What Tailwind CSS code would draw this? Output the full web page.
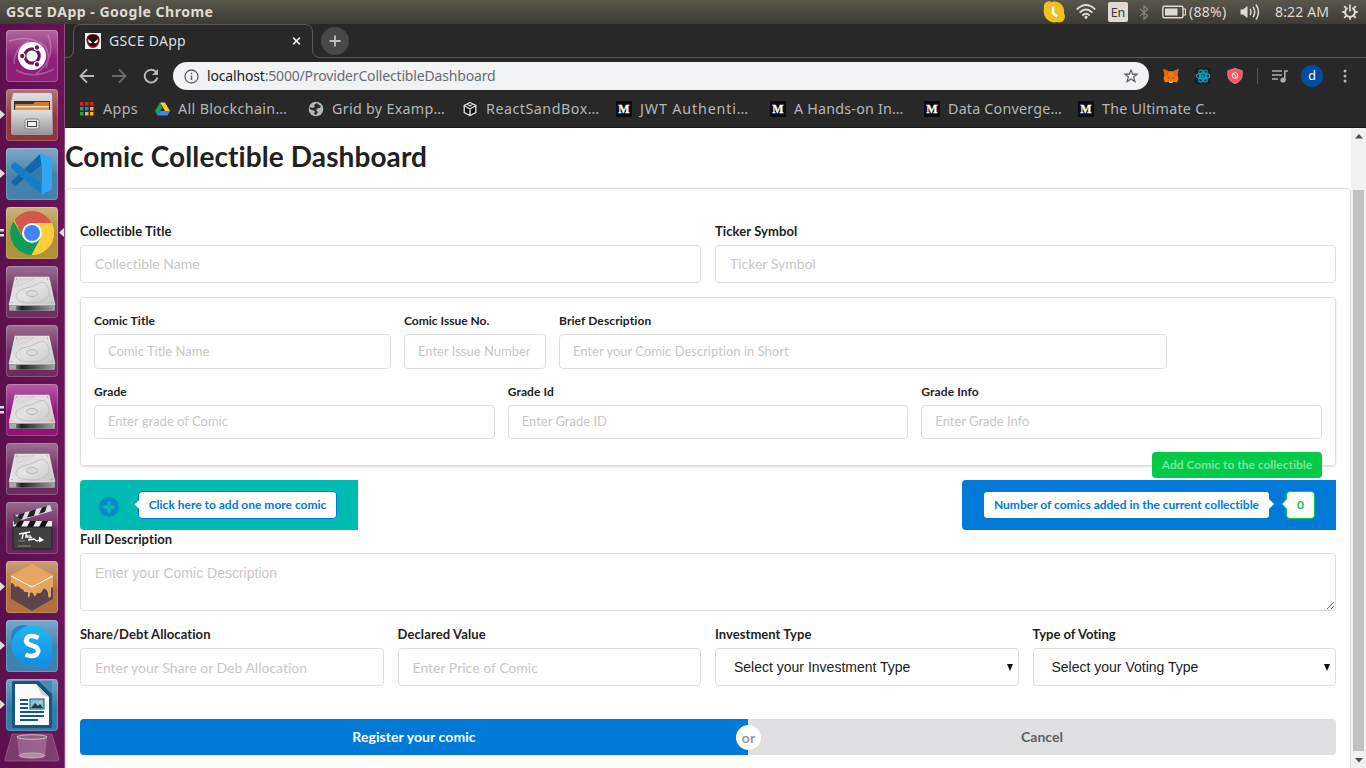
<!DOCTYPE html>
<html lang="en">
<head>
<meta charset="utf-8">
<title>GSCE DApp</title>
<script src="https://cdn.jsdelivr.net/npm/@tailwindcss/browser@4"></script>
</head>
<body class="w-[1366px] h-[768px] overflow-hidden bg-white">
<svg width="0" height="0" class="absolute">
  <defs>
    <linearGradient id="gloss" x1="0" y1="0" x2="0" y2="1"><stop offset="0" stop-color="#fff" stop-opacity=".34"/><stop offset=".55" stop-color="#fff" stop-opacity=".03"/><stop offset="1" stop-color="#fff" stop-opacity=".03"/></linearGradient>
    <linearGradient id="silver" x1="0" y1="0" x2="0" y2="1"><stop offset="0" stop-color="#e0e0e0"/><stop offset="1" stop-color="#989898"/></linearGradient>
    <linearGradient id="disk" x1="0" y1="0" x2="1" y2="1"><stop offset="0" stop-color="#d8d8d8"/><stop offset=".5" stop-color="#e2e2e2"/><stop offset="1" stop-color="#c4c4c4"/></linearGradient>
    <linearGradient id="diskfront" x1="0" y1="0" x2="1" y2="0"><stop offset="0" stop-color="#777"/><stop offset=".15" stop-color="#222"/><stop offset="1" stop-color="#999"/></linearGradient>
    <linearGradient id="sky" x1="0" y1="0" x2="0" y2="1"><stop offset="0" stop-color="#24b4f0"/><stop offset="1" stop-color="#0f8fe0"/></linearGradient>
    <symbol id="drive" viewBox="0 0 52 52">
      <path d="M9 11H43L49 38V44Q49 45 48 45H4Q3 45 3 44V38Z" fill="#777"/>
      <path d="M9 11H43L49 39H3Z" fill="url(#disk)" stroke="#f0f0f0" stroke-width=".5"/>
      <path d="M3.400 39.500H48.600V44.500H3.400Z" fill="#a9a9a9"/><path d="M10 40H47V44.500H10Z" fill="url(#diskfront)"/>
      <path d="M10 29C13 21 24 23 31 18C37 14 42 18 43 25C44 33 36 37 26 37C15 37 9 34 10 29Z" fill="none" stroke="#bdbdbd" stroke-width=".9"/>
      <ellipse cx="26" cy="27.500" rx="5.500" ry="3" fill="#dcdcdc" stroke="#b0b0b0" stroke-width=".9"/><path d="M12 14L28 12.500Q22 17 11 20Z" fill="none" stroke="#cbcbcb" stroke-width=".8"/>
      <circle cx="10.500" cy="13" r=".6" fill="#888"/><circle cx="41.500" cy="13" r=".6" fill="#888"/><circle cx="6" cy="36.500" r=".6" fill="#888"/><circle cx="46" cy="36.500" r=".6" fill="#888"/>
    </symbol>
    <symbol id="medium" viewBox="0 0 16 16"><rect width="16" height="16" fill="#0d0d0d"/><text x="8" y="12" text-anchor="middle" font-family="Liberation Serif, serif" font-weight="700" font-size="12" fill="#fff" stroke="#fff" stroke-width=".3">M</text></symbol>
  </defs>
</svg>

<div class="flex h-[768px] w-[1366px] flex-col font-['Open_Sans',sans-serif]">
  <!-- system panel -->
  <header class="flex h-6 shrink-0 items-center bg-linear-to-b from-[#59564c] to-[#3d3b36] pl-[6px] text-[#dfdbd2]">
    <div class="w-[1037px] whitespace-nowrap text-[14px] font-bold leading-6 tracking-[.5px] font-['Noto_Sans',sans-serif]">GSCE DApp - Google Chrome</div>
    <svg width="22" height="22" viewBox="0 0 22 22"><path d="M1 7C0 2 5 -1 9 1C16 -1 22 5 21 12C24 18 19 23 14 21C7 23 -1 17 1 7Z" fill="#f2c01e"/><path d="M10 5.500V12L14 15.500" fill="none" stroke="#fff" stroke-width="2.600"/></svg>
    <svg class="ml-[11px]" width="20" height="16" viewBox="0 0 20 16" fill="none" stroke="#dfdbd2" stroke-width="1.800"><path d="M.8 5.500Q10-3.500 19.200 5.500M3.600 8.600Q10 2.300 16.400 8.600M6.300 11.500Q10 7.900 13.700 11.500"/><path d="M8 13L10 11.500L12 13L10 15.500Z" fill="#dfdbd2" stroke="none"/></svg>
    <div class="ml-[12px] h-5 w-5 rounded-[2px] bg-[#dfdbd2] text-center text-[12.500px] leading-[21px] text-[#3d3b36] font-['Noto_Sans',sans-serif]">En</div>
    <svg class="ml-[11px]" width="10" height="17" viewBox="0 0 11 17" fill="none" stroke="#8b887f" stroke-width="1.300"><path d="M1 4.500L9.500 12L5.500 15.800V1.200L9.500 5L1 12.500"/></svg>
    <svg class="ml-[13px]" width="24" height="14" viewBox="0 0 24 14"><rect x=".8" y="1.300" width="20.200" height="11.400" rx="1.500" fill="none" stroke="#dfdbd2" stroke-width="1.400"/><rect x="3" y="3.500" width="12.500" height="7" fill="#dfdbd2"/><path d="M21 4H23.500V10H21" fill="none" stroke="#dfdbd2" stroke-width="1.200"/></svg>
    <div class="ml-[3px] w-[51px] whitespace-nowrap text-[14px] leading-6 tracking-[.3px] font-['Noto_Sans',sans-serif]">(88%)</div>
    <svg width="20" height="18" viewBox="0 0 20 18"><path d="M.5 6.500H3L7.500 3V15L3 11.500H.5Z" fill="#dfdbd2"/><path d="M10 6Q12 9 10 12M13 3.800Q16.500 9 13 14.200M16 1.500Q21 9 16 16.500" fill="none" stroke="#dfdbd2" stroke-width="1.500"/></svg>
    <div class="ml-[15px] w-[67px] whitespace-nowrap text-[14px] leading-6 tracking-[.15px] font-['Noto_Sans',sans-serif]">8:22 AM</div>
    <svg width="16" height="16" viewBox="0 0 18 18" fill="none" stroke="#dfdbd2"><path d="M6.300 4.300A5.500 5.500 0 1 0 11.700 4.300" stroke-width="2.200"/><path d="M9 .5V8.500" stroke-width="2"/><path d="M2.500 2.500L4.500 4.500M15.500 2.500L13.500 4.500M.3 9H4M14 9H17.700M2.500 15.500L5 13M15.500 15.500L13 13M9 14V17.700" stroke-width="2"/></svg>
  </header>

  <div class="flex min-h-0 grow">
    <!-- launcher -->
    <nav class="relative flex w-[65px] shrink-0 flex-col gap-[7px] border-r border-[#8d4b80] bg-linear-to-r from-[#5c0f4d] to-[#691457] pl-[6px] pt-[6px]">
      <div class="h-[52px] w-[52px] overflow-hidden rounded-[4px] bg-[#8a1a72] ring-1 ring-inset ring-white/25"><svg width="52" height="52" viewBox="0 0 52 52"><rect width="52" height="52" fill="url(#gloss)"/><g fill="none" stroke="#fff" stroke-opacity=".25" stroke-width="1.500"><path d="M3 11Q23 4 39 16Q45 25 40 38M42 5Q51 28 30 44M8 34Q8 18 23 11M10 40Q27 50 48 39"/></g><circle cx="26" cy="26" r="14" fill="#fff"/><circle cx="26" cy="26" r="7.200" fill="none" stroke="#6c1459" stroke-width="3.200"/><g stroke="#fff" stroke-width="1.100" fill="#6c1459"><circle cx="16.200" cy="26" r="2.700"/><circle cx="31" cy="17.500" r="2.700"/><circle cx="31" cy="34.500" r="2.700"/></g></svg></div>
      <div class="h-[52px] w-[52px] overflow-hidden rounded-[4px] bg-[#8c3038] ring-1 ring-inset ring-white/20"><svg width="52" height="52" viewBox="0 0 52 52"><rect width="52" height="52" fill="url(#gloss)"/><path d="M7 5Q7 4 8 4H44Q46 4 46 6L47 44Q47 46 45 46H7Q5 46 5 44V13Z" fill="url(#silver)"/><path d="M8 12H44V24H8Z" fill="#333"/><path d="M9 15H27L29 13H43V22H9Z" fill="#d8762c"/><path d="M10 17H43V18.500H10Z" fill="#fff3dd"/><path d="M9 18.500H43V22H9Z" fill="#e89550"/><path d="M6 21H46V45H6Z" fill="url(#silver)"/><rect x="19" y="30" width="14" height="10" rx="2" fill="#ddd" stroke="#888"/><rect x="21.500" y="32.500" width="9" height="5" fill="#eee" stroke="#444"/></svg></div>
      <div class="h-[52px] w-[52px] overflow-hidden rounded-[4px] bg-[#3f7da8] ring-1 ring-inset ring-white/20"><svg width="52" height="52" viewBox="0 0 52 52"><rect width="52" height="52" fill="url(#gloss)"/><path d="M5 34L34 6L36 17L9 38Z" fill="#1066a8"/><path d="M5 17L9 14L37 35L35 46L5 20Z" fill="#147fc8"/><path d="M34 5L46 10.500V41L35.500 47V17Z" fill="#2fa6f2"/><path d="M36 17V36L24 26.500Z" fill="#367da8"/></svg></div>
      <div class="h-[52px] w-[52px] overflow-hidden rounded-[4px] bg-[#ae8c37] ring-1 ring-inset ring-white/20"><svg width="52" height="52" viewBox="0 0 52 52"><rect width="52" height="52" fill="url(#gloss)"/><circle cx="26" cy="26" r="22" fill="#fbce3c"/><path d="M7 15A22 22 0 0 0 26 48L34.700 31L26 26L17.300 31L7.500 14Z" fill="#119b58"/><path d="M8.300 13A22 22 0 0 1 45.600 16H26L17.300 31Z" fill="#d3574b"/><path d="M25.500 48L34.700 31L26 16H45.600A22 22 0 0 1 25.500 48Z" fill="#fbce3c"/><circle cx="26" cy="26" r="10" fill="#fff"/><circle cx="26" cy="26" r="8" fill="#4384f3"/></svg></div>
      <div class="h-[52px] w-[52px] overflow-hidden rounded-[4px] bg-[#68265a] ring-1 ring-inset ring-white/20"><svg width="52" height="52"><rect width="52" height="52" fill="url(#gloss)"/><use href="#drive"/></svg></div>
      <div class="h-[52px] w-[52px] overflow-hidden rounded-[4px] bg-[#68265a] ring-1 ring-inset ring-white/20"><svg width="52" height="52"><rect width="52" height="52" fill="url(#gloss)"/><use href="#drive"/></svg></div>
      <div class="h-[52px] w-[52px] overflow-hidden rounded-[4px] bg-[#8e0b75] ring-1 ring-inset ring-white/20"><svg width="52" height="52"><rect width="52" height="52" fill="url(#gloss)"/><use href="#drive"/></svg></div>
      <div class="h-[52px] w-[52px] overflow-hidden rounded-[4px] bg-[#68265a] ring-1 ring-inset ring-white/20"><svg width="52" height="52"><rect width="52" height="52" fill="url(#gloss)"/><use href="#drive"/></svg></div>
      <div class="h-[52px] w-[52px] overflow-hidden rounded-[4px] bg-[#631e56] ring-1 ring-inset ring-white/20"><svg width="52" height="52" viewBox="0 0 52 52"><rect width="52" height="52" fill="url(#gloss)"/><path d="M7 14L44 3L46 9L9 20Z" fill="#ddd"/><path d="M13 12L19 10.500L16 17L10 18ZM24 9L30 7L28 14L21 15.500ZM36 5.500L41 4L39 10L33 12Z" fill="#222"/><path d="M7 19H46V25H7Z" fill="#eee"/><path d="M12 19H18L15 25H9ZM24 19H30L27 25H21ZM36 19H42L39 25H33Z" fill="#111"/><path d="M7 25H46V47H7Z" fill="#414141" stroke="#222"/><path d="M7 12L16 18L8 23Z" fill="#444"/><path d="M13 32L24 30M17.500 31L16 37M20 31V36M20 34H22V36M24 33V36L26 35M22 38L28 37L31 39L36 37" stroke="#fff" stroke-width="1.300" fill="none"/><path d="M33 34.500L38 38L33 40.500Z" fill="#fff"/><path d="M12 39H19M12 44H25" stroke="#999" stroke-width=".8"/></svg></div>
      <div class="h-[52px] w-[52px] overflow-hidden rounded-[4px] bg-[#b06d35] ring-1 ring-inset ring-white/20"><svg width="52" height="52" viewBox="0 0 52 52"><rect width="52" height="52" fill="url(#gloss)"/><path d="M26 3L47 14V38L26 50L5 38V14Z" fill="#e4a660"/><path d="M5 22Q8 22 9 26Q13 24 15 28Q18 28 18 31H22V36Q24 37 24 32Q27 30 28 35Q30 36 31 32Q36 33 37 28Q42 26 43 38V28L47 26V38L26 50L5 38Z" fill="#5d454b"/><path d="M42 24H45V35Q43.500 38 42 35Z" fill="#e4a660"/><path d="M5 15L26 26L47 15" fill="none" stroke="#fff" stroke-width="1"/></svg></div>
      <div class="h-[52px] w-[52px] overflow-hidden rounded-[4px] bg-[#397dab] ring-1 ring-inset ring-white/20"><svg width="52" height="52" viewBox="0 0 52 52"><rect width="52" height="52" fill="url(#gloss)"/><circle cx="17" cy="17" r="12" fill="#1b87c6"/><circle cx="35" cy="36" r="12" fill="#1292e0"/><circle cx="26" cy="26" r="20.500" fill="url(#sky)"/><path d="M32.500 18Q26 14.500 21.800 17Q18.500 20.500 22 24Q26 25.500 30 27Q34 31 30.500 34.500Q26 37.500 19.500 34.500" fill="none" stroke="#fff" stroke-width="4.600"/></svg></div>
      <div class="h-[52px] w-[52px] overflow-hidden rounded-[4px] bg-[#2d77a9] ring-1 ring-inset ring-white/20"><svg width="52" height="52" viewBox="0 0 52 52"><rect width="52" height="52" fill="url(#gloss)"/><path d="M6 3Q6 2 8 2H33L46 15V47Q46 49 44 49H8Q6 49 6 47Z" fill="#135680"/><path d="M34 2H46V14Z" fill="#4a8ab0"/><path d="M9 5H30L43 18V46H9Z" fill="#fafafa"/><path d="M30 5L43 18L36 16Z" fill="#d0d0d0"/><path d="M14 21H22M14 25H22M14 29H22M14 33H38M14 37H38M14 41H32" stroke="#145a86" stroke-width="2"/><rect x="24" y="20" width="14" height="10" fill="#7cc3ea" stroke="#145a86"/><path d="M25 29L29 24L32 27L34 25L37 29Z" fill="#333"/><circle cx="34.500" cy="23" r="1.500" fill="#f7d23e"/></svg></div>
      <svg class="-ml-[2px] -mt-[5px] shrink-0" width="56" height="31" viewBox="0 0 56 31"><path d="M8 1H48L55 26Q55 28 53 28H2Q0 28 1 26Z" fill="#fff" fill-opacity=".18" stroke="#a5709a" stroke-width=".6"/><path d="M13 4L15 23Q28 28 41 23L43 4Z" fill="#fff" fill-opacity=".2"/><ellipse cx="28" cy="4" rx="15" ry="2.300" fill="#8d6284" stroke="#ccc" stroke-width=".9"/><ellipse cx="28" cy="22.500" rx="13" ry="2.500" fill="#c7b3c3" fill-opacity=".5" stroke="#cbb" stroke-width=".8"/></svg>
      <!-- running and focus marks -->
      <svg class="absolute left-0 top-0" width="64" height="744" fill="#dcdcdc"><path d="M0 86L5 90.500L0 95ZM0 145L5 149.500L0 154ZM0 558L5 562.500L0 567ZM0 617L5 621.500L0 626ZM0 676L5 680.500L0 685ZM64 204L59 208.500L64 213ZM0 205H4V207.500H0ZM0 210H4V212.500H0ZM0 382H4V384.500H0ZM0 387H4V389.500H0Z"/></svg>
    </nav>

    <div class="flex min-w-0 grow flex-col">
      <!-- tab strip -->
      <div class="relative flex h-[34px] shrink-0 items-center bg-[#282828] text-[#dadce0]">
        <svg class="absolute left-0 top-0" width="1301" height="34" fill="none" stroke="#5a5a5a"><path d="M0 33.500H2Q8.500 33 8.500 26V8Q9 .5 16 .5H240Q247.500 .5 247.500 8V26Q248 33 255 33.500H1301"/></svg>
        <svg class="ml-5" width="16" height="16" viewBox="0 0 16 16"><rect width="16" height="16" fill="#eee"/><path d="M8 1C13 1 15 4 14.500 8C14 12 11 15 8 15C5 15 2 12 1.500 8C1 4 3 1 8 1Z" fill="#8d1022"/><path d="M8 2C12 2 13 4 13 7L11 13H5L3 7C3 4 4 2 8 2Z" fill="#180b0e"/><path d="M3 6L7.200 9.500Q5 11 3.500 9ZM13 6L8.800 9.500Q11 11 12.500 9Z" fill="#fff"/></svg>
        <div class="ml-2 w-[183px] whitespace-nowrap pb-[2px] text-[14px] tracking-[.3px] font-['Noto_Sans',sans-serif]">GSCE DApp</div>
        <svg width="9" height="10" viewBox="0 0 10 10" stroke="#e4e4e4" stroke-width="1.800"><path d="M1.300 1.300L8.700 8.700M8.700 1.300L1.300 8.700"/></svg>
        <svg class="ml-5" width="28" height="28" viewBox="0 0 28 28"><circle cx="14" cy="14" r="14" fill="#484848"/><path d="M14 8.500V19.500M8.500 14H19.500" stroke="#c0c0c0" stroke-width="1.800"/></svg>
      </div>
      <!-- toolbar -->
      <div class="flex h-9 shrink-0 items-center bg-[#282828] pl-[14px]">
        <svg width="16" height="16" viewBox="0 0 16 16" fill="none" stroke="#b6b8bb" stroke-width="1.900"><path d="M15 8H2M8 1.300L1.500 8L8 14.700"/></svg>
        <svg class="ml-4" width="16" height="16" viewBox="0 0 16 16" fill="none" stroke="#6b6b6b" stroke-width="1.900"><path d="M1 8H14M8 1.300L14.500 8L8 14.700"/></svg>
        <svg class="ml-4" width="16" height="16" viewBox="0 0 16 16"><path d="M13.300 4.300A6.400 6.400 0 1 0 14.400 9.500" fill="none" stroke="#b6b8bb" stroke-width="1.900"/><path d="M15 1V7H9Z" fill="#b6b8bb"/></svg>
        <div class="ml-[14px] flex h-7 w-[976px] items-center rounded-full bg-[#f1f3f4] pl-[11px] pr-[11px] text-[#6a6d71]">
          <svg width="15" height="15" viewBox="0 0 15 15"><circle cx="7.500" cy="7.500" r="6.500" fill="none" stroke="#5f6368" stroke-width="1.300"/><path d="M7.500 6.500V11M7.500 3.700V5.200" stroke="#5f6368" stroke-width="1.500"/></svg>
          <div class="ml-2 grow whitespace-nowrap pb-[2px] text-[14px] tracking-[-.17px] font-['Noto_Sans',sans-serif]"><span class="text-[#202124]">localhost</span>:5000/ProviderCollectibleDashboard</div>
          <svg width="14" height="14" viewBox="0 0 24 24" fill="none" stroke="#5f6368" stroke-width="2.200"><path d="M12 1.800L15 9H22.500L16.500 13.800L18.700 21.500L12 17L5.300 21.500L7.500 13.800L1.500 9H9Z"/></svg>
        </div>
        <svg class="ml-[14px]" width="16" height="16" viewBox="0 0 17 16"><path d="M.5 .5L6 3H11L16.500 .5L15.500 7L16.500 11L15 15L11 14L9.500 15.500H7.500L6 14L2 15L.5 11L1.500 7Z" fill="#f0780f"/><path d="M.5 .5L6 3L5 8L1.500 7ZM16.500 .5L11 3L12 8L15.500 7Z" fill="#dd6a10"/><path d="M6 12.500L8 14H9L11 12.500L10 15.500H7Z" fill="#dcc5b4"/><path d="M4.500 9L7 10L6 11ZM12.500 9L10 10L11 11Z" fill="#283448"/></svg>
        <svg class="ml-4" width="16" height="16" viewBox="0 0 16 16" fill="none" stroke="#00b4d8" stroke-width="1.100"><rect width="16" height="16" fill="#1d1d1d" stroke="none"/><ellipse cx="8" cy="8" rx="6.800" ry="2.700"/><ellipse cx="8" cy="8" rx="6.800" ry="2.700" transform="rotate(60 8 8)"/><ellipse cx="8" cy="8" rx="6.800" ry="2.700" transform="rotate(120 8 8)"/><circle cx="8" cy="8" r="1" fill="#00b4d8"/></svg>
        <svg class="ml-4" width="16" height="16" viewBox="0 0 16 16"><path d="M8 .3L15.300 2.700V7Q15 13 8 15.700Q1 13 .7 7V2.700Z" fill="#f9585f" stroke="#ff9599" stroke-width=".6"/><circle cx="8" cy="7.500" r="2.800" fill="none" stroke="#fff" stroke-width=".9"/><path d="M6 5.500L10 9.500" stroke="#fff" stroke-width=".9"/></svg>
        <div class="ml-[14px] h-4 w-px bg-[#555]"></div>
        <svg class="ml-[14px]" width="16" height="14" viewBox="0 0 16 14" fill="none" stroke="#a9abae" stroke-width="1.600"><path d="M0 2H10M0 6H10M0 10H6M12.800 11V2H16"/><circle cx="11" cy="11" r="1.800" fill="#a9abae"/></svg>
        <div class="ml-[13px] h-[22px] w-[22px] rounded-full bg-[#014ba0] text-center text-[12.500px] leading-[21px] text-white font-['Noto_Sans',sans-serif]">d</div>
        <svg class="ml-5" width="4" height="14" viewBox="0 0 4 14" fill="#b6b8bb"><circle cx="2" cy="2" r="1.500"/><circle cx="2" cy="7" r="1.500"/><circle cx="2" cy="12" r="1.500"/></svg>
      </div>
      <!-- bookmarks -->
      <div class="flex h-[34px] shrink-0 items-center border-b border-[#1c1c1c] bg-[#282828] pl-[14px] pb-[3px] text-[14.300px] text-[#b4b6ba] font-['Noto_Sans',sans-serif]">
        <div class="flex w-[75px] items-center gap-[9px] whitespace-nowrap"><svg class="ml-px shrink-0" width="14" height="14" viewBox="0 0 14 14"><path d="M0 0H3.500V3.500H0ZM5 0H8.500V3.500H5ZM10 0H13.500V3.500H10Z" fill="#e32020"/><path d="M0 5H3.500V8.500H0ZM0 10H3.500V13.500H0Z" fill="#19a54a"/><path d="M5 5H8.500V8.500H5Z" fill="#1f7bea"/><path d="M10 5H13.500V8.500H10ZM5 10H8.500V13.500H5ZM10 10H13.500V13.500H10Z" fill="#f9b31a"/></svg><span class="tracking-[.35px]">Apps</span></div>
        <div class="flex w-[154px] items-center gap-2 whitespace-nowrap"><svg class="ml-px shrink-0" width="15" height="14" viewBox="0 0 15 14"><path d="M5 .5H10L15 9H10Z" fill="#fbcb2d"/><path d="M5 .5L7.500 5L2.500 13.500L0 9Z" fill="#12a15f"/><path d="M5 9H15L12.500 13.500H2.500Z" fill="#4184f2"/></svg><span class="tracking-[.35px]">All Blockchain…</span></div>
        <div class="flex w-[154px] items-center gap-2 whitespace-nowrap"><svg class="shrink-0" width="16" height="16" viewBox="0 0 16 16"><circle cx="8" cy="8" r="7.300" fill="#b8b8b8"/><path d="M9 2L6 4L7 6L4 7L2 6L1.500 8L4 9L7 10L6 13L8 14L10 11L8 9L10 7L12 7L13 5L11 4Z" fill="#2c2c2c"/></svg><span class="tracking-[.3px]">Grid by Examp…</span></div>
        <div class="flex w-[154px] items-center gap-2 whitespace-nowrap"><svg class="shrink-0" width="16" height="16" viewBox="0 0 16 16" fill="none" stroke="#dcdcdc" stroke-width="1.400"><circle cx="8" cy="8" r="7.500" fill="#151515" stroke="none"/><path d="M8 1.500L13.800 4.500V11.500L8 14.500L2.200 11.500V4.500ZM2.200 4.500L8 8L13.800 4.500M8 8V14.500M5 3L8 5L11 3"/></svg><span class="tracking-[.5px]">ReactSandBox…</span></div>
        <div class="flex w-[154px] items-center gap-2 whitespace-nowrap"><svg class="shrink-0" width="16" height="16"><use href="#medium"/></svg><span class="tracking-[.85px]">JWT Authenti…</span></div>
        <div class="flex w-[154px] items-center gap-2 whitespace-nowrap"><svg class="shrink-0" width="16" height="16"><use href="#medium"/></svg><span class="tracking-[.2px]">A Hands-on In…</span></div>
        <div class="flex w-[154px] items-center gap-2 whitespace-nowrap"><svg class="shrink-0" width="16" height="16"><use href="#medium"/></svg><span class="tracking-[.2px]">Data Converge…</span></div>
        <div class="flex items-center gap-2 whitespace-nowrap"><svg class="shrink-0" width="16" height="16"><use href="#medium"/></svg><span class="tracking-[.25px]">The Ultimate C…</span></div>
      </div>

      <!-- page -->
      <div class="flex min-h-0 grow">
        <main class="flex w-[1286px] shrink-0 flex-col bg-white text-[#212121] font-['Lato',sans-serif] [font-variant-ligatures:none]">
          <h1 class="h-[60px] pt-[10px] text-[28px] font-bold leading-9 tracking-[.1px]">Comic Collectible Dashboard</h1>
          <form class="grow rounded-t-[4px] border border-b-0 border-[#dededf] px-[14px] pt-[33px]">
            <div class="grid grid-cols-2 gap-[14px] text-[14px]">
              <label class="flex flex-col"><span class="h-[23px] text-[13px] font-bold leading-[19px] tracking-[.08px]">Collectible Title</span><input class="h-[38px] rounded-[4px] border border-[#dededf] px-[14px] pb-[2px] placeholder:text-[#c7c7c7]" placeholder="Collectible Name"></label>
              <label class="flex flex-col"><span class="h-[23px] text-[13px] font-bold leading-[19px] tracking-[.08px]">Ticker Symbol</span><input class="h-[38px] rounded-[4px] border border-[#dededf] px-[14px] pb-[2px] placeholder:text-[#c7c7c7]" placeholder="Ticker Symbol"></label>
            </div>
            <section class="relative mt-[14px] h-[169px] rounded-[4px] border border-[#dededf] px-[13px] pt-[14px] text-[13px] shadow-[0_1px_2px_rgba(34,36,38,.15)]">
              <div class="flex gap-[13px]">
                <label class="flex w-[297px] flex-col"><span class="h-[22px] text-[12px] font-bold leading-[18px] tracking-[.08px]">Comic Title</span><input class="h-[35px] rounded-[4px] border border-[#dededf] px-[13px] pb-[2px] placeholder:text-[#c7c7c7]" placeholder="Comic Title Name"></label>
                <label class="flex w-[142px] flex-col"><span class="h-[22px] text-[12px] font-bold leading-[18px]">Comic Issue No.</span><input class="h-[35px] w-full rounded-[4px] border border-[#dededf] px-[13px] pb-[2px] placeholder:text-[#c7c7c7]" placeholder="Enter Issue Number"></label>
                <label class="flex w-[608px] flex-col"><span class="h-[22px] text-[12px] font-bold leading-[18px] tracking-[.1px]">Brief Description</span><input class="h-[35px] rounded-[4px] border border-[#dededf] px-[13px] pb-[2px] placeholder:text-[#c7c7c7]" placeholder="Enter your Comic Description in Short"></label>
              </div>
              <div class="mt-[14px] grid grid-cols-3 gap-[13px]">
                <label class="flex flex-col"><span class="h-[22px] text-[12px] font-bold leading-[18px] tracking-[.1px]">Grade</span><input class="h-[34px] rounded-[4px] border border-[#dededf] px-[13px] pb-[2px] placeholder:text-[#c7c7c7]" placeholder="Enter grade of Comic"></label>
                <label class="flex flex-col"><span class="h-[22px] text-[12px] font-bold leading-[18px] tracking-[.1px]">Grade Id</span><input class="h-[34px] rounded-[4px] border border-[#dededf] px-[13px] pb-[2px] placeholder:text-[#c7c7c7]" placeholder="Enter Grade ID"></label>
                <label class="flex flex-col"><span class="h-[22px] text-[12px] font-bold leading-[18px] tracking-[.1px]">Grade Info</span><input class="h-[34px] rounded-[4px] border border-[#dededf] px-[13px] pb-[2px] placeholder:text-[#c7c7c7]" placeholder="Enter Grade Info"></label>
              </div>
              <button type="button" class="absolute right-[13px] top-[154px] h-[26px] w-[170px] whitespace-nowrap rounded-[4px] bg-[#00ca46] text-[12px] font-bold leading-[26px] text-white/50">Add Comic to the collectible</button>
            </section>
            <div class="mt-[14px] flex h-[50px] justify-between text-[12px] font-bold">
              <div class="flex w-[278px] items-start rounded-l-[4px] bg-[#00bbb2] pl-[19px]">
                <svg class="mt-[17px]" width="20" height="20" viewBox="0 0 20 20"><circle cx="10" cy="10" r="10" fill="#0688cd"/><path d="M10 4V16M4 10H16" stroke="#00bbb2" stroke-width="3.400"/></svg>
                <div class="relative ml-[19px] mt-[11px] h-7 w-[199px] whitespace-nowrap rounded-[4px] border border-[#007ad6] bg-white text-center leading-[26px] text-[#007ad6]">Click here to add one more comic<svg class="absolute -left-[6px] top-[7px]" width="7" height="11" viewBox="0 0 7 11"><path d="M7 0L1 5.500L7 11Z" fill="#fff"/><path d="M6 .5L.7 5.500L6 10.500" fill="none" stroke="#007ad6" stroke-width=".8"/></svg></div>
              </div>
              <div class="flex w-[374px] items-start rounded-l-[4px] bg-[#007ad6] pl-[22px]">
                <div class="relative mt-3 h-[26px] w-[285px] whitespace-nowrap rounded-[3px] bg-white text-center leading-[26px] text-[#007ad6]">Number of comics added in the current collectible<svg class="absolute -right-[5px] top-[6px]" width="6" height="12" viewBox="0 0 6 12"><path d="M0 0L6 6L0 12Z" fill="#fff"/></svg></div>
                <div class="relative ml-[17px] mt-[11px] h-7 w-[29px] rounded-[4px] border border-[#00ca46] bg-white text-center leading-[26px] text-[#21ba45]">0<svg class="absolute -left-[6px] top-[6px]" width="7" height="12" viewBox="0 0 7 12"><path d="M7 0L1 6L7 12Z" fill="#fff"/><path d="M6 .5L.7 6L6 11.500" fill="none" stroke="#00ca46"/></svg></div>
              </div>
            </div>
            <label class="flex flex-col"><span class="h-[23px] text-[13px] font-bold leading-[19px] tracking-[.08px]">Full Description</span><textarea class="h-[58px] rounded-[4px] border border-[#dededf] px-[14px] pt-[10px] text-[14px] leading-[18px] placeholder:text-[#c7c7c7] font-['Liberation_Sans',sans-serif]" placeholder="Enter your Comic Description"></textarea></label>
            <div class="mt-[14px] grid grid-cols-4 gap-[14px] text-[14px]">
              <label class="flex flex-col"><span class="h-[23px] text-[13px] font-bold leading-[19px] tracking-[.08px]">Share/Debt Allocation</span><input class="h-[38px] rounded-[4px] border border-[#dededf] px-[14px] placeholder:text-[#c7c7c7]" placeholder="Enter your Share or Deb Allocation"></label>
              <label class="flex flex-col"><span class="h-[23px] text-[13px] font-bold leading-[19px] tracking-[.12px]">Declared Value</span><input class="h-[38px] rounded-[4px] border border-[#dededf] px-[14px] placeholder:text-[#c7c7c7]" placeholder="Enter Price of Comic"></label>
              <div class="flex flex-col"><span class="h-[23px] text-[13px] font-bold leading-[19px] tracking-[.05px]">Investment Type</span><div class="flex h-[38px] items-center justify-between rounded-[4px] border border-[#dededf] pl-[18px] pr-[5px] font-['Liberation_Sans',sans-serif]">Select your Investment Type<svg width="6" height="7" viewBox="0 0 7 7" preserveAspectRatio="none"><path d="M0 0H7L3.500 7Z" fill="#111"/></svg></div></div>
              <div class="flex flex-col"><span class="h-[23px] text-[13px] font-bold leading-[19px]">Type of Voting</span><div class="flex h-[38px] items-center justify-between rounded-[4px] border border-[#dededf] pl-[18px] pr-[5px] font-['Liberation_Sans',sans-serif]">Select your Voting Type<svg width="6" height="7" viewBox="0 0 7 7" preserveAspectRatio="none"><path d="M0 0H7L3.500 7Z" fill="#111"/></svg></div></div>
            </div>
            <div class="relative mt-[33px] flex h-9 text-[14px] font-bold">
              <button type="button" class="w-[668px] rounded-l-[4px] bg-[#007ad6] pb-[2px] tracking-[.08px] text-white">Register your comic</button>
              <button type="button" class="w-[588px] rounded-r-[4px] bg-[#dfe0e1] pb-[2px] text-[#606162]">Cancel</button>
              <div class="absolute left-[656px] top-[6px] h-[25px] w-[25px] rounded-full bg-white text-center leading-[26px] text-[#999]">or</div>
            </div>
          </form>
        </main>
        <!-- scrollbar -->
        <div class="flex grow flex-col items-center bg-[#f1f1f1]">
          <svg class="mt-[6px]" width="8" height="5" viewBox="0 0 8 5"><path d="M0 4.500L4 0L8 4.500Z" fill="#4d4d4d"/></svg>
          <div class="mt-[51px] h-[561px] w-[11px] bg-[#c1c1c1]"></div>
          <svg class="mt-[7px]" width="8" height="5" viewBox="0 0 8 5"><path d="M0 0L4 4.500L8 0Z" fill="#4d4d4d"/></svg>
        </div>
      </div>
    </div>
  </div>
</div>
</body>
</html>
